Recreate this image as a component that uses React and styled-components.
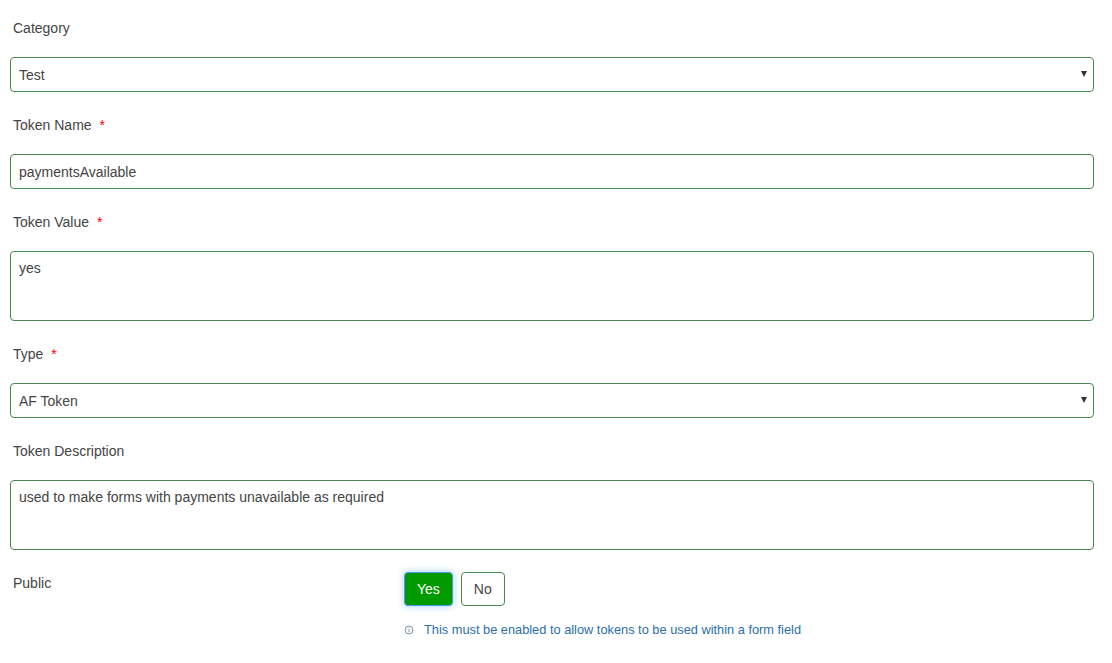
import React from "react";
import styled, { createGlobalStyle } from "styled-components";

const GlobalStyle = createGlobalStyle`
    html, body {
        margin: 0;
        padding: 0;
        background: #fff;
    }
    body {
        font-family: "Liberation Sans", Arial, sans-serif;
        font-size: 14px;
        color: #444;
    }
`;

const App = () => {
    return (
        <>
            <GlobalStyle />
            <Form>
                <Group>
                    <Label>Category</Label>
                    <SelectWrap>
                        <Select defaultValue="Test">
                            <option>Test</option>
                        </Select>
                        <Caret />
                    </SelectWrap>
                </Group>

                <Group>
                    <Label>Token Name<Required>*</Required></Label>
                    <Input type="text" defaultValue="paymentsAvailable" />
                </Group>

                <Group>
                    <Label>Token Value<Required>*</Required></Label>
                    <TextArea defaultValue="yes" />
                </Group>

                <Group>
                    <Label>Type<Required>*</Required></Label>
                    <SelectWrap>
                        <Select defaultValue="AF Token">
                            <option>AF Token</option>
                        </Select>
                        <Caret />
                    </SelectWrap>
                </Group>

                <Group>
                    <Label>Token Description</Label>
                    <TextArea defaultValue="used to make forms with payments unavailable as required" />
                </Group>

                <PublicRow>
                    <PublicLabel>Public</PublicLabel>
                    <div>
                        <Buttons>
                            <Toggle type="button" $active>Yes</Toggle>
                            <Toggle type="button">No</Toggle>
                        </Buttons>
                        <Hint>
                            <svg width="10" height="10" viewBox="0 0 10 10" fill="none" stroke="#6f8ba5" strokeWidth="0.9">
                                <circle cx="5" cy="5" r="4" />
                                <path d="M5 4.4V7.4M5 2.6V3.5" />
                            </svg>
                            <span>This must be enabled to allow tokens to be used within a form field</span>
                        </Hint>
                    </div>
                </PublicRow>
            </Form>
        </>
    );
};

export default App;

const Form = styled.form`
    width: 1084px;
    margin-left: 10px;
`;

const Group = styled.div`
    margin-bottom: 5px;
`;

const Label = styled.label`
    display: block;
    height: 57px;
    padding-left: 3px;
    line-height: 57px;
    font-size: 14px;
    color: #444;
`;

const Required = styled.span`
    margin-left: 8px;
    color: #f00;
`;

const fieldStyles = `
    display: block;
    width: 100%;
    box-sizing: border-box;
    border: 1px solid #4a8a50;
    border-radius: 4px;
    padding: 0 8px;
    margin: 0;
    background: #fff;
    font-family: "Liberation Sans", Arial, sans-serif;
    font-size: 14px;
    color: #444;
    outline: none;
`;

const SelectWrap = styled.div`
    position: relative;
`;

const Select = styled.select`
    ${fieldStyles}
    height: 35px;
    appearance: none;
`;

const Caret = styled.span`
    position: absolute;
    top: 14px;
    right: 7px;
    width: 0;
    height: 0;
    border-left: 3px solid transparent;
    border-right: 3px solid transparent;
    border-top: 6px solid #333;
    pointer-events: none;
`;

const Input = styled.input`
    ${fieldStyles}
    height: 35px;
`;

const TextArea = styled.textarea`
    ${fieldStyles}
    height: 70px;
    padding-top: 7px;
    line-height: 18px;
    resize: none;
`;

const PublicRow = styled.div`
    display: grid;
    grid-template-columns: 394px 1fr;
    margin-top: 22px;
`;

const PublicLabel = styled.div`
    padding-left: 3px;
    line-height: 22px;
    color: #444;
`;

const Buttons = styled.div`
    display: flex;
    gap: 8px;
`;

const Toggle = styled.button`
    box-sizing: border-box;
    height: 34px;
    padding: 0 12px;
    border: 1px solid ${({ $active }) => ($active ? "#4a9be8" : "#4a8a50")};
    border-radius: 4px;
    background: ${({ $active }) => ($active ? "#009900" : "#fff")};
    box-shadow: ${({ $active }) => ($active ? "0 0 6px 1px rgba(90, 165, 255, 0.45)" : "none")};
    color: ${({ $active }) => ($active ? "#fff" : "#444")};
    font-family: "Liberation Sans", Arial, sans-serif;
    font-size: 14px;
`;

const Hint = styled.div`
    display: flex;
    align-items: center;
    gap: 10px;
    margin-top: 16px;
    font-size: 12.8px;
    line-height: 16px;
    color: #2a6fa8;
`;
